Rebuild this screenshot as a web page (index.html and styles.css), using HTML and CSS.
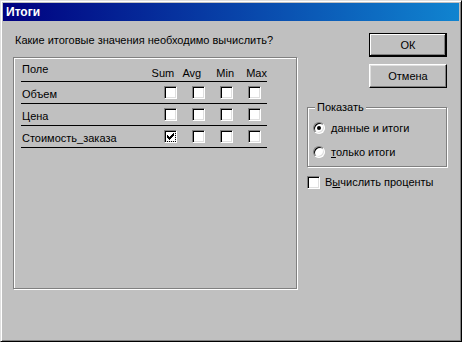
FILE: index.html
```html
<!DOCTYPE html>
<html lang="ru">
<head>
    <meta charset="UTF-8">
    <title>Итоги</title>
    <link rel="stylesheet" href="styles.css">
</head>
<body>
    <div class="window">
        <div class="titlebar">Итоги</div>
        <div class="dialog-body">
            <div class="left-col">
                <div class="prompt">Какие итоговые значения необходимо вычислить?</div>
                <div class="fields">
                    <div class="grid-head">
                        <span class="head-name">Поле</span>
                        <span class="head-fn fn-sum">Sum</span>
                        <span class="head-fn fn-avg">Avg</span>
                        <span class="head-fn fn-min">Min</span>
                        <span class="head-fn fn-max">Max</span>
                    </div>
                    <div class="row">
                        <span class="name">Объем</span>
                        <span class="cell"><span class="check"></span></span>
                        <span class="cell"><span class="check"></span></span>
                        <span class="cell"><span class="check"></span></span>
                        <span class="cell last"><span class="check"></span></span>
                    </div>
                    <div class="row">
                        <span class="name">Цена</span>
                        <span class="cell"><span class="check"></span></span>
                        <span class="cell"><span class="check"></span></span>
                        <span class="cell"><span class="check"></span></span>
                        <span class="cell last"><span class="check"></span></span>
                    </div>
                    <div class="row">
                        <span class="name">Стоимость_заказа</span>
                        <span class="cell"><span class="check checked focused">
                            <svg width="7" height="7" viewBox="0 0 7 7"><path d="M0 2h1v1h1v1h1V3h1V2h1V1h1V0h1v3H6v1H5v1H4v1H3v1H2V6H1V5H0z" fill="#000"/></svg>
                        </span></span>
                        <span class="cell"><span class="check"></span></span>
                        <span class="cell"><span class="check"></span></span>
                        <span class="cell last"><span class="check"></span></span>
                    </div>
                </div>
            </div>
            <div class="right-col">
                <button class="btn btn-default">ОК</button>
                <button class="btn btn-cancel">Отмена</button>
                <fieldset class="group">
                    <legend>Показать</legend>
                    <div class="option first">
                        <span class="radio selected"></span>
                        <span><u>д</u>анные и итоги</span>
                    </div>
                    <div class="option">
                        <span class="radio"></span>
                        <span><u>т</u>олько итоги</span>
                    </div>
                </fieldset>
                <div class="percent">
                    <span class="check"></span>
                    <span>В<u>ы</u>числить проценты</span>
                </div>
            </div>
        </div>
    </div>
</body>
</html>
```

FILE: styles.css
```css
body {
    margin: 0;
    font-family: "Liberation Sans", Arial, sans-serif;
    font-size: 11px;
    color: #000;
    background-color: #c0c0c0;
}
.window {
    width: 462px;
    height: 342px;
    box-sizing: border-box;
    background-color: #c0c0c0;
    border: 1px solid;
    border-color: #dfdfdf #000 #000 #dfdfdf;
    box-shadow: inset 1px 1px #fff, inset -1px -1px #808080;
    padding: 2px;
    display: flex;
    flex-direction: column;
}
.titlebar {
    height: 18px;
    flex-shrink: 0;
    background: linear-gradient(to right, #000080, #1084d0);
    color: #fff;
    font-weight: bold;
    font-size: 12px;
    display: flex;
    align-items: center;
    padding-left: 3px;
}
.dialog-body {
    display: flex;
    padding: 11px 0 0 10px;
}
.left-col {
    width: 284px;
}
.prompt {
    margin: 2px 0 0 2px;
    line-height: 13px;
    white-space: nowrap;
}
.fields {
    margin-top: 10px;
    width: 284px;
    height: 232px;
    box-sizing: border-box;
    border: 1px solid #808080;
    box-shadow: inset 1px 1px #fff, 1px 1px #fff;
    padding: 1px 0 0 7px;
}
.grid-head {
    display: flex;
    width: 246px;
    height: 22px;
    border-bottom: 1px solid #000;
    line-height: 13px;
}
.head-name {
    width: 130px;
    padding: 4px 0 0 1px;
}
.head-fn {
    padding-top: 8px;
}
.fn-sum { width: 31px; }
.fn-avg { width: 34px; }
.fn-min { width: 30px; }
.row {
    display: flex;
    width: 246px;
    height: 21px;
    border-bottom: 1px solid #000;
    line-height: 13px;
}
.name {
    width: 142px;
    padding: 6px 0 0 1px;
}
.cell {
    width: 28px;
    padding-top: 4px;
}
.cell.last {
    width: 18px;
}
.check {
    display: flex;
    align-items: center;
    justify-content: center;
    width: 13px;
    height: 13px;
    box-sizing: border-box;
    background-color: #fff;
    border: 1px solid;
    border-color: #808080 #fff #fff #808080;
    box-shadow: inset 1px 1px #000, inset -1px -1px #dfdfdf;
}
.check.focused {
    outline: 1px dotted #000;
    outline-offset: -2px;
}
.right-col {
    width: 140px;
    margin-left: 10px;
    display: flex;
    flex-direction: column;
}
.btn {
    align-self: flex-end;
    width: 78px;
    height: 24px;
    padding: 0;
    font-family: "Liberation Sans", Arial, sans-serif;
    font-size: 11px;
    color: #000;
    background-color: #c0c0c0;
    border: 1px solid;
    border-color: #fff #000 #000 #fff;
    box-shadow: inset -1px -1px #808080, inset 1px 1px #dfdfdf;
}
.btn-default {
    margin-top: 1px;
    border-color: #000;
    box-shadow: inset -1px -1px #000, inset 1px 1px #fff, inset -2px -2px #808080;
}
.btn-cancel {
    margin-top: 7px;
}
.group {
    margin: 13px 0 0 0;
    padding: 0 0 8px 5px;
    min-inline-size: auto;
    border: 1px solid #808080;
    box-shadow: inset 1px 1px #fff, 1px 1px #fff;
}
.group legend {
    margin-left: 2px;
    padding: 0 2px;
    line-height: 13px;
    background-color: #c0c0c0;
}
.option {
    display: flex;
    align-items: center;
    height: 13px;
    margin-top: 11px;
}
.option.first {
    margin-top: 7px;
}
.radio {
    position: relative;
    width: 12px;
    height: 12px;
    box-sizing: border-box;
    margin-right: 6px;
    border-radius: 50%;
    background-color: #fff;
    border: 1px solid;
    border-color: #808080 #fff #fff #808080;
    box-shadow: inset 1px 1px #000, inset -1px -1px #dfdfdf;
}
.radio.selected::after {
    content: "";
    position: absolute;
    left: 3px;
    top: 3px;
    width: 4px;
    height: 4px;
    border-radius: 50%;
    background-color: #000;
}
.percent {
    display: flex;
    align-items: center;
    margin-top: 9px;
    line-height: 13px;
}
.percent .check {
    margin-right: 5px;
}
```
